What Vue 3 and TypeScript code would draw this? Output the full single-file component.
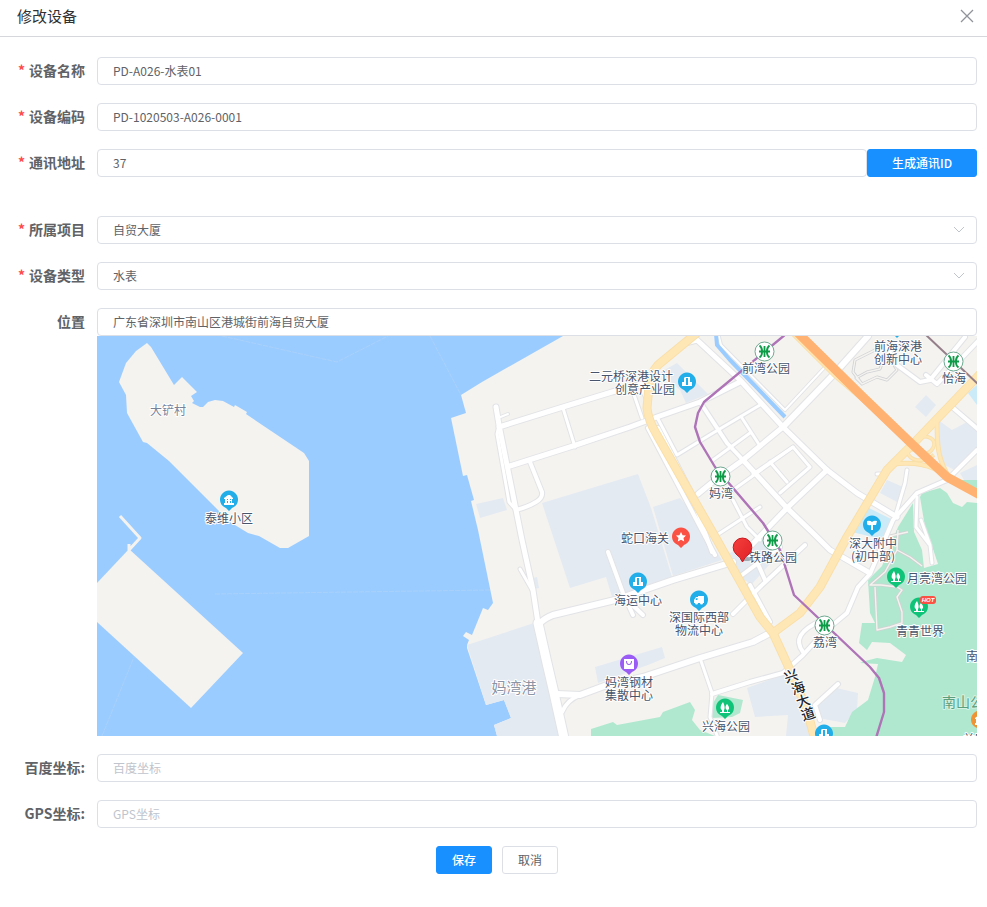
<script setup lang="ts">
import { reactive } from 'vue'

interface DeviceForm {
  name: string
  code: string
  address: string
  project: string
  type: string
  location: string
  baidu: string
  gps: string
}

interface Road {
  d: string
  w: number
}

// y is the middle line of the text
interface MapLabel {
  x: number
  y: number
  text: string
  kind?: 'place' | 'harbour' | 'park'
}

interface Pin {
  x: number
  y: number
  color: string
  icon: 'house' | 'tower' | 'star' | 'truck' | 'bag' | 'trees' | 'school'
}

const form = reactive<DeviceForm>({
  name: 'PD-A026-水表01',
  code: 'PD-1020503-A026-0001',
  address: '37',
  project: '自贸大厦',
  type: '水表',
  location: '广东省深圳市南山区港城街前海自贸大厦',
  baidu: '',
  gps: '',
})

const industrial: string[] = [
  '467,645 534,623 541,650 552,693 566,736 497,736 494,725 511,718 504,700 486,705',
  '476,504 503,498 507,510 480,518',
  '542,503 638,474 651,508 672,577 612,597 606,577 570,588',
  '653,507 680,498 690,510 722,560 673,576',
  '661,372 677,363 708,394 686,403 680,390',
  '595,667 662,647 665,658 648,665 598,683',
  '724,556 762,537 778,555 752,584 738,577',
  '747,688 783,675 790,673 813,736 786,736 788,715 755,717',
  '813,705 832,687 858,693 857,710 845,723 818,718',
  '915,407 926,395 936,405 926,417',
  '938,420 952,430 967,422 977,430 977,448 955,470 940,463',
  '960,473 977,465 977,480 964,480',
  '887,480 903,487 897,502 880,493',
  '533,578 537,577 539,588 534,589',
]

const campus: string[] = ['867,507 893,520 885,540 852,532', '968,393 977,385 977,405']

const parks: string[] = [
  '920,497 922,493 940,488 947,493 953,503 962,507 967,502 977,503 977,736 833,736 829,727 845,727 852,712 868,700 875,677 878,664 860,663 865,661 877,658 902,662 906,655 890,643 872,642 867,650 859,643 862,623 875,623 870,613 868,580 882,566 898,527 913,503 914,532 922,550 924,568 938,564 930,540 925,527',
  '958,480 977,480 977,494',
  '591,729 613,722 617,725 660,717 663,712 690,702 695,710 692,720 700,730 715,736 591,736',
  '713,703 718,695 743,700 740,713 732,717 712,718',
]

const roads: Road[] = [
  { d: 'M496 407L499 425L516 510L522 540L533 590L538 623', w: 5 },
  { d: 'M538 623L547 663L554 693L564 738', w: 9 },
  { d: 'M499 425L497 434L509 502L516 510', w: 3 },
  { d: 'M498 418L508 414', w: 2 },
  { d: 'M499 427L563 407L612 392L650 382', w: 5 },
  { d: 'M510 466L573 446L630 427L657 417L700 402L740 382', w: 5 },
  { d: 'M563 408L575 447', w: 3 },
  { d: 'M530 462L542 492Q543 498 536 502Q528 507 516 510', w: 4 },
  { d: 'M520 569L532 590', w: 3 },
  { d: 'M540 623Q545 618 553 615L615 600L673 580L733 562', w: 6 },
  { d: 'M608 552L623 593L633 615M624 597L643 615', w: 4 },
  { d: 'M557 694L580 695L607 685L643 677L700 658L753 642L770 633', w: 6 },
  { d: 'M562 712Q567 700 580 695', w: 4 },
  { d: 'M700 658L712 693L710 717L718 738', w: 3 },
  { d: 'M712 694L750 682L783 673L803 655L823 633L847 613L858 587L870 574L893 520L917 493L947 480L977 450', w: 4 },
  { d: 'M743 460L787 508L813 533L830 550L868 572', w: 5 },
  { d: 'M803 652C794 640 800 630 822 620', w: 4 },
  { d: 'M685 343L697 340L740 380L783 427L827 470L857 493L897 517', w: 5 },
  { d: 'M718 333L721 345L785 410L825 367', w: 2 },
  { d: 'M783 427L835 373L868 336', w: 6 },
  { d: 'M825 362L857 392L912 445', w: 5 },
  { d: 'M700 402L727 443L743 460', w: 4 },
  { d: 'M760 405L713 433L677 455L657 417', w: 3 },
  { d: 'M742 418L760 446M713 460L750 433', w: 3 },
  { d: 'M783 427L743 460L715 480L698 494', w: 5 },
  { d: 'M733 490L793 447L810 467L780 493', w: 3 },
  { d: 'M753 474L793 447M770 462L787 482', w: 3 },
  { d: 'M827 470L787 508L742 555', w: 5 },
  { d: 'M760 507L717 535M733 500L747 527L760 540', w: 3 },
  { d: 'M733 614L760 587L805 545', w: 4 },
  { d: 'M757 562L765 580M742 575L780 547', w: 4 },
  { d: 'M631 386L642 418M641 388L648 402', w: 3 },
  { d: 'M648 428L715 555M658 428L690 490', w: 4 },
  { d: 'M690 490L712 552M750 585L770 622', w: 4 },
  { d: 'M897 365L920 382L930 380L965 337M926 375L937 384L979 340', w: 4 },
  { d: 'M886 346L897 364', w: 4 },
  { d: 'M952 407L979 430', w: 4 },
  { d: 'M907 470L905 483L895 517', w: 3 },
  { d: 'M917 497L916 527L929 544M921 520L930 545L932 563', w: 3 },
  { d: 'M838 684L815 705L820 720', w: 4 },
  { d: 'M877 474L882 474', w: 3 },
]

const trails =
  'M893 342L875 350L855 360L853 372L862 384L877 377L887 380L897 370L892 362M862 384L856 378L867 372L880 369L889 345M898 530L897 550L910 557L922 566M897 550L885 572L870 585L881 585L897 587M875 587L877 630L890 627L902 623L902 612L897 597L902 590L897 587M890 536L908 532'

const highways: Road[] = [
  { d: 'M698 332L658 365Q650 374 649 385L647 408Q648 420 657 435L690 493L717 540L760 617L773 633L790 670L807 710L815 740', w: 7 },
  { d: 'M980 374L912 445L887 470L847 537L820 587L800 613L773 633', w: 7 },
  { d: 'M793 333L835 375L890 422L915 450', w: 4 },
  { d: 'M937 419C937 442 937 460 950 478', w: 3 },
  { d: 'M893 464C915 462 930 464 948 476', w: 3 },
  { d: 'M913 440C928 432 938 440 933 448C928 457 918 454 912 446', w: 2 },
  { d: 'M907 451C910 462 922 463 934 455', w: 2 },
]

const labels: MapLabel[] = [
  { x: 168, y: 410, text: '大铲村', kind: 'place' },
  { x: 229, y: 518, text: '泰维小区' },
  { x: 631, y: 376, text: '二元桥深港设计' },
  { x: 645, y: 389, text: '创意产业园' },
  { x: 766, y: 368, text: '前湾公园' },
  { x: 898, y: 346, text: '前海深港' },
  { x: 898, y: 359, text: '创新中心' },
  { x: 954, y: 378, text: '怡海' },
  { x: 721, y: 493, text: '妈湾' },
  { x: 645, y: 538, text: '蛇口海关' },
  { x: 638, y: 600, text: '海运中心' },
  { x: 699, y: 617, text: '深国际西部' },
  { x: 699, y: 630, text: '物流中心' },
  { x: 773, y: 557, text: '铁路公园' },
  { x: 873, y: 543, text: '深大附中' },
  { x: 873, y: 556, text: '(初中部)' },
  { x: 937, y: 578, text: '月亮湾公园' },
  { x: 920, y: 631, text: '青青世界' },
  { x: 825, y: 642, text: '荔湾' },
  { x: 978, y: 656, text: '南山' },
  { x: 629, y: 682, text: '妈湾钢材' },
  { x: 629, y: 695, text: '集散中心' },
  { x: 726, y: 726, text: '兴海公园' },
  { x: 975, y: 739, text: '兰园' },
  { x: 514, y: 688, text: '妈湾港', kind: 'harbour' },
  { x: 970, y: 702, text: '南山公园', kind: 'park' },
]

const roadName: MapLabel[] = [
  { x: 791, y: 676, text: '兴' },
  { x: 798, y: 688, text: '海' },
  { x: 803, y: 701, text: '大' },
  { x: 808, y: 714, text: '道' },
]

const blue = '#21aee9'
const green = '#0fc478'
const pins: Pin[] = [
  { x: 229, y: 500, color: blue, icon: 'house' },
  { x: 687, y: 382, color: blue, icon: 'tower' },
  { x: 897, y: 327, color: blue, icon: 'tower' },
  { x: 681, y: 537, color: '#fa5144', icon: 'star' },
  { x: 638, y: 582, color: blue, icon: 'tower' },
  { x: 699, y: 600, color: blue, icon: 'truck' },
  { x: 629, y: 664, color: '#9a5cf5', icon: 'bag' },
  { x: 725, y: 708, color: green, icon: 'trees' },
  { x: 896, y: 577, color: green, icon: 'trees' },
  { x: 919, y: 607, color: green, icon: 'trees' },
  { x: 872, y: 525, color: blue, icon: 'school' },
  { x: 824, y: 734, color: blue, icon: 'tower' },
  { x: 980, y: 720, color: '#ef9436', icon: 'house' },
]

const glyphs: Record<Pin['icon'], string> = {
  house: 'M-5 -2L-1 -5H1L4 -2V-1H3V3H5V5H-5V3H-4V-1H-5ZM-2 -1V0H-1V-1ZM1 -1V0H2V-1ZM-2 1V3H-1V1ZM1 1V3H2V1Z',
  tower: 'M-2 -5H3V0H5V4H-5V0H-3V-4ZM-1 -4V3H1V-4Z',
  star: 'M0 -5L1.6 -1.8L5 -1.4L2.5 1L3.2 4.5L0 2.8L-3.2 4.5L-2.5 1L-5 -1.4L-1.6 -1.8Z',
  truck: 'M-5 0L-3 -3H-1V-4H5V3H4A1.5 1.5 0 0 1 1 3H-1A1.5 1.5 0 0 1 -4 3H-5ZM-3.5 0H-1.5V-2H-2.5Z',
  bag: 'M-5 -5H5V5H-5ZM-3 -3Q-3 1 0 1Q3 1 3 -3H2Q2 0 0 0Q-2 0 -2 -3Z',
  trees: 'M-2 -6C-5 -2 -5 1 -3 2V4H-5V5H5V4H3V2C5 1 4 -2 2 -4C0 -2 0 1 2 2V4H-1V2C0 1 0 -2 -2 -6Z',
  school: 'M-5 -4Q-2 -5 0 -3Q2 -5 5 -4L4 0H1V5H-1V0Q-4 1 -5 -1Z',
}

const stations: { x: number; y: number }[] = [
  { x: 764, y: 351 },
  { x: 720, y: 476 },
  { x: 772, y: 540 },
  { x: 824, y: 625 },
  { x: 953, y: 361 },
]

function generateAddress(): void {
  form.address = String(Math.floor(Math.random() * 250) + 1)
}
</script>

<template>
  <section class="dialog" role="dialog" aria-labelledby="dialog-title">
    <header class="dialog-header">
      <h1 id="dialog-title" class="dialog-title">修改设备</h1>
      <button type="button" class="close" aria-label="关闭">
        <svg width="14" height="14" viewBox="0 0 14 14"><path d="M1 1L13 13M13 1L1 13" /></svg>
      </button>
    </header>

    <form class="form" @submit.prevent>
      <div class="row">
        <label class="label required" for="name">设备名称</label>
        <input id="name" v-model="form.name" class="control" type="text" />
      </div>
      <div class="row">
        <label class="label required" for="code">设备编码</label>
        <input id="code" v-model="form.code" class="control" type="text" />
      </div>
      <div class="row row-spaced">
        <label class="label required" for="address">通讯地址</label>
        <input id="address" v-model="form.address" class="control" type="text" />
        <button type="button" class="btn btn-primary btn-wide" @click="generateAddress">生成通讯ID</button>
      </div>
      <div class="row">
        <label class="label required" for="project">所属项目</label>
        <div class="select">
          <select id="project" v-model="form.project" class="control">
            <option>自贸大厦</option>
          </select>
          <svg class="arrow" width="12" height="8" viewBox="0 0 12 8"><path d="M1 1L6 6L11 1" /></svg>
        </div>
      </div>
      <div class="row">
        <label class="label required" for="type">设备类型</label>
        <div class="select">
          <select id="type" v-model="form.type" class="control">
            <option>水表</option>
          </select>
          <svg class="arrow" width="12" height="8" viewBox="0 0 12 8"><path d="M1 1L6 6L11 1" /></svg>
        </div>
      </div>
      <div class="row">
        <label class="label" for="location">位置</label>
        <div class="stack">
          <input id="location" v-model="form.location" class="control" type="text" />
          <svg class="map" viewBox="97 336 880 400" preserveAspectRatio="xMidYMid slice">
            <defs>
              <linearGradient id="marker-fill" x1="0" y1="0" x2="1" y2="1">
                <stop offset="0" stop-color="#f5403c" />
                <stop offset="1" stop-color="#e01f26" />
              </linearGradient>
            </defs>
            <rect class="sea" x="97" y="336" width="880" height="400" />
            <path class="ferry" d="M222 336L337 362L388 336M430 336L461 395M102 736L134 657M215 594L490 590" />

            <polygon
              class="land"
              points="147,343 151,347 174,385 182,377 197,392 191,396 194,401 192,403 200,407 203,407 208,402 215,400 223,401 234,407 235,405 247,412 246,414 304,453 309,461 309,536 288,548 280,548 259,536 248,533 230,522 169,461 147,443 143,442 127,413 126,395 119,382 126,363 136,351"
            />
            <polygon class="land" points="129,549 243,653 191,708 97,622 97,583" />
            <path class="jetty" d="M120 516L140 538L129 550V544" />
            <polygon
              class="land"
              points="563,336 482,382 461,395 466,413 451,418 463,476 467,475 474,500 471,501 478,530 493,603 488,610 483,608 472,635 466,632 463,636 469,640 467,645 467,648 486,705 504,700 511,718 494,725 497,736 977,736 977,336"
            />

            <polygon v-for="points in industrial" :key="points" class="industrial" :points="points" />
            <polygon v-for="points in campus" :key="points" class="campus" :points="points" />
            <polygon v-for="points in parks" :key="points" class="park" :points="points" />

            <path class="trail-case" :d="trails" />
            <path class="trail" :d="trails" />
            <path v-for="road in roads" :key="'c' + road.d" class="road-case" :d="road.d" :stroke-width="road.w + 2" />
            <path v-for="road in roads" :key="'r' + road.d" class="road" :d="road.d" :stroke-width="road.w" />
            <path class="canal" d="M716 334L717 345L730 360L785 417" />
            <path v-for="road in highways" :key="'c' + road.d" class="highway-case" :d="road.d" :stroke-width="road.w + 2" />
            <path v-for="road in highways" :key="'r' + road.d" class="highway" :d="road.d" :stroke-width="road.w" />
            <path class="expressway" d="M797 332L863 397L913 445L947 477L980 495" />
            <path class="metro" d="M786 334L704 402L698 413L695 427L700 442L715 467L763 523L780 550L794 595L870 667L879 678L884 693V712L876 738" />
            <path class="metro metro-east" d="M926 335L979 385" />

            <g v-for="station in stations" :key="station.x" :transform="`translate(${station.x} ${station.y})`">
              <circle class="station" cx="0.5" cy="0.5" r="9.5" />
              <path class="station-mark" d="M-4.500 -5.500C-1 -3 -1 4 -4.500 6.500M5.500 -5.500C2 -3 2 4 5.500 6.500M-5 0.500H6M0.500 -5V6" />
            </g>

            <g v-for="pin in pins" :key="`${pin.x}-${pin.y}`" :transform="`translate(${pin.x} ${pin.y})`">
              <path :fill="pin.color" d="M0 11L-3 8A9 9 0 1 1 3 8Z" />
              <path fill="#fff" fill-rule="evenodd" :d="glyphs[pin.icon]" />
            </g>
            <rect class="hot" x="920" y="596" width="16" height="8" rx="3" />
            <text class="hot-text" x="928" y="602">HOT</text>

            <text
              v-for="label in labels"
              :key="`${label.x}-${label.y}`"
              :class="['map-label', label.kind]"
              :x="label.x"
              :y="label.y"
              dy="5"
            >{{ label.text }}</text>
            <text
              v-for="label in roadName"
              :key="label.text"
              class="map-label road-name"
              dy="5"
              :transform="`translate(${label.x} ${label.y}) rotate(-18)`"
            >{{ label.text }}</text>

            <ellipse class="shadow" cx="746" cy="559" rx="6" ry="2" />
            <path class="marker" d="M742.500 562Q740.500 557 736 554A9.300 9.300 0 1 1 749 554Q744.500 557 742.500 562Z" />
          </svg>
        </div>
      </div>
      <div class="row">
        <label class="label" for="baidu">百度坐标:</label>
        <input id="baidu" v-model="form.baidu" class="control" type="text" placeholder="百度坐标" />
      </div>
      <div class="row">
        <label class="label" for="gps">GPS坐标:</label>
        <input id="gps" v-model="form.gps" class="control" type="text" placeholder="GPS坐标" />
      </div>
      <div class="actions">
        <button type="submit" class="btn btn-primary">保存</button>
        <button type="button" class="btn">取消</button>
      </div>
    </form>
  </section>
</template>

<style>
body {
  background: #fff;
}
</style>

<style scoped>
.dialog,
.control,
.btn {
  font-family: 'Noto Sans CJK SC', 'Noto Sans', sans-serif;
}

.dialog {
  color: #606266;
}

.dialog-header {
  display: flex;
  align-items: center;
  justify-content: space-between;
  height: 36px;
  padding: 0 13px 0 17px;
  border-bottom: 1px solid #d5d7dc;
}

.dialog-title {
  margin: 0;
  padding-bottom: 4px;
  color: #303133;
  font-size: 15px;
  font-weight: 400;
  line-height: 32px;
}

.close {
  display: flex;
  padding: 0 0 4px;
  border: 0;
  background: none;
  cursor: pointer;
}

.close svg {
  fill: none;
  stroke: #909399;
  stroke-width: 1.3;
}

.form {
  padding: 20px 10px 33px 17px;
}

.row {
  display: flex;
  align-items: flex-start;
  margin-bottom: 18px;
}

.row-spaced {
  margin-bottom: 39px;
}

.label {
  box-sizing: border-box;
  flex: 0 0 80px;
  padding-right: 12px;
  font-size: 14px;
  font-weight: 700;
  line-height: 26px;
  text-align: right;
  white-space: nowrap;
}

.required::before {
  content: '*';
  margin-right: 4px;
  color: #ff4949;
}

.control {
  box-sizing: border-box;
  display: block;
  flex: 1;
  width: 100%;
  min-width: 0;
  height: 28px;
  margin: 0;
  padding: 0 15px 2px;
  border: 1px solid #dcdfe6;
  border-radius: 4px;
  outline: none;
  background: #fff;
  color: #606266;
  font-size: 12px;
  appearance: none;
}

.control::placeholder {
  color: #c0c4cc;
  opacity: 1;
}

.control:focus {
  border-color: #1890ff;
}

.stack {
  flex: 1;
  min-width: 0;
}

.select {
  display: grid;
  flex: 1;
  align-items: center;
}

.select > * {
  grid-area: 1 / 1;
}

.arrow {
  justify-self: end;
  margin-right: 12px;
  fill: none;
  stroke: #c0c4cc;
  pointer-events: none;
}

.btn {
  height: 28px;
  padding: 0 15px;
  border: 1px solid #dcdfe6;
  border-radius: 3px;
  background: #fff;
  color: #606266;
  font-size: 12px;
  line-height: 12px;
  cursor: pointer;
}

.btn-primary {
  border-color: #1890ff;
  background: #1890ff;
  color: #fff;
  font-weight: 500;
}

.btn-wide {
  flex: 0 0 110px;
}

.actions {
  display: flex;
  justify-content: center;
  gap: 10px;
}

.map {
  display: block;
  width: 100%;
  height: 400px;
}

.map path {
  stroke-linejoin: round;
}

.sea {
  fill: #9bccff;
}

.ferry {
  fill: none;
  stroke: #a9d1fb;
  stroke-dasharray: 5 1;
}

.land {
  fill: #f4f3f0;
}

.jetty {
  fill: none;
  stroke: #f4f3f0;
  stroke-width: 3;
}

.industrial {
  fill: #e4eaf2;
}

.campus {
  fill: #cbebf8;
}

.park {
  fill: #b0e8cf;
}

.road-case,
.road,
.trail-case,
.trail,
.highway-case,
.highway,
.canal,
.expressway,
.metro {
  fill: none;
}

.road-case,
.road {
  stroke-linecap: round;
}

.road-case {
  stroke: #e2e3e6;
}

.road {
  stroke: #fff;
}

.trail-case {
  stroke: #d0d1d3;
  stroke-width: 3;
}

.trail {
  stroke: #f4f3f0;
  stroke-width: 1.4;
}

.highway-case {
  stroke: #f9dfa9;
}

.highway {
  stroke: #ffe7b5;
}

.canal {
  stroke: #9bccff;
  stroke-width: 4;
}

.expressway {
  stroke: #ffb271;
  stroke-width: 9;
}

.metro {
  stroke: #ae74b7;
  stroke-width: 2.4;
}

.metro-east {
  stroke: #947f89;
  stroke-width: 2;
}

.station {
  fill: #fff;
  stroke: #6eaa91;
}

.station-mark {
  fill: none;
  stroke: #0d9b48;
  stroke-width: 1.8;
}

.hot {
  fill: #fa5144;
}

.hot-text {
  fill: #fff;
  font: italic 700 6px 'Liberation Sans', sans-serif;
  text-anchor: middle;
}

.map-label {
  fill: #47546b;
  stroke: #fff;
  stroke-width: 2;
  stroke-linejoin: round;
  paint-order: stroke;
  font-size: 12px;
  text-anchor: middle;
}

.place {
  fill: #77829b;
}

.harbour {
  fill: #8d95a5;
  font-size: 15px;
}

.map-label.park {
  fill: #5b9f7c;
  stroke: #d4f1e3;
  font-size: 14px;
}

.road-name {
  fill: #24272e;
  font-size: 14px;
  font-weight: 500;
}

.marker {
  fill: url(#marker-fill);
  stroke: #c9161d;
}

.shadow {
  fill: #7b8088;
  opacity: 0.6;
}
</style>
